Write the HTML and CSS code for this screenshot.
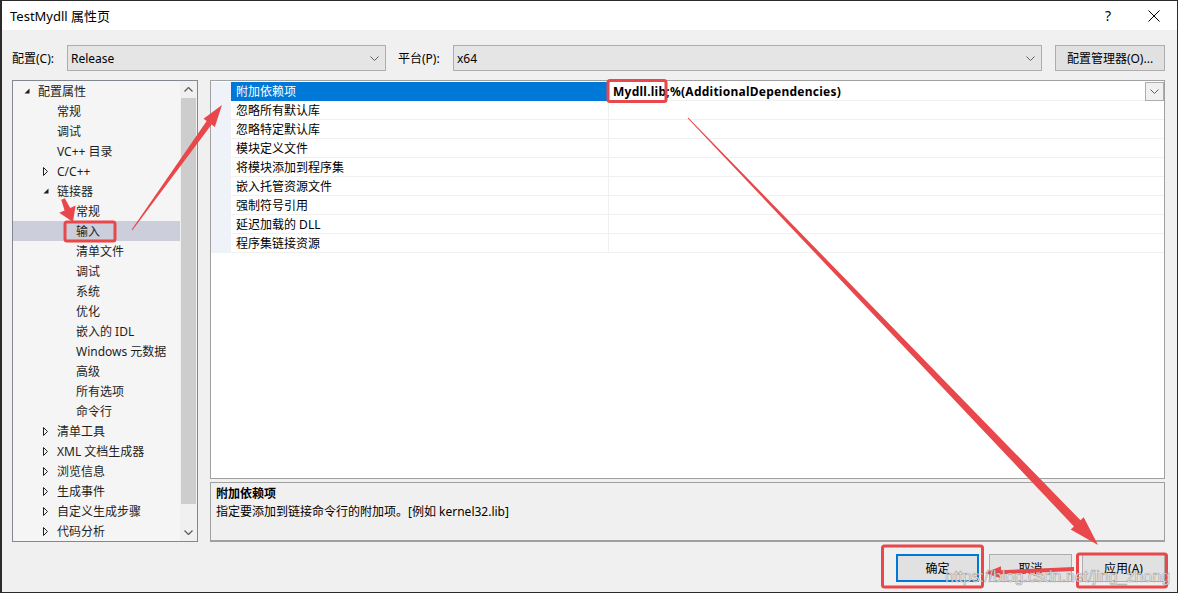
FILE: index.html
```html
<!DOCTYPE html>
<html lang="zh-CN">
<head>
    <meta charset="UTF-8">
    <title>TestMydll 属性页</title>
    <link rel="stylesheet" href="styles.css">
</head>
<body>
<div class="screen">
    <div class="window">
        <!-- Barra de título -->
        <div class="titlebar">
            <span class="title">TestMydll 属性页</span>
            <span class="help">?</span>
            <span class="close-btn">
                <svg width="12" height="12" viewBox="0 0 12 12"><path d="M0.5 0.5 L11.5 11.5 M11.5 0.5 L0.5 11.5" stroke="#000" stroke-width="1" fill="none"/></svg>
            </span>
        </div>

        <!-- Configuración / plataforma -->
        <div class="config-row">
            <span class="config-label">配置(C):</span>
            <div class="combo combo-config">
                <span>Release</span>
                <svg class="chevron" width="9" height="5" viewBox="0 0 9 5"><path d="M0.5 0.5 L4.5 4.5 L8.5 0.5" stroke="#606060" fill="none"/></svg>
            </div>
            <span class="config-label platform-label">平台(P):</span>
            <div class="combo combo-platform">
                <span>x64</span>
                <svg class="chevron" width="9" height="5" viewBox="0 0 9 5"><path d="M0.5 0.5 L4.5 4.5 L8.5 0.5" stroke="#606060" fill="none"/></svg>
            </div>
            <button class="btn btn-manager">配置管理器(O)...</button>
        </div>

        <div class="main">
            <!-- Árbol de propiedades -->
            <div class="tree">
                <div class="tree-list">
                    <div class="tree-row lvl0"><span class="twisty"><svg width="8" height="8" viewBox="0 0 8 8"><path d="M6.5 1.5 L6.5 6.5 L1.5 6.5 Z" fill="#1e1e1e"/></svg></span>配置属性</div>
                    <div class="tree-row lvl1"><span class="twisty"></span>常规</div>
                    <div class="tree-row lvl1"><span class="twisty"></span>调试</div>
                    <div class="tree-row lvl1"><span class="twisty"></span>VC++ 目录</div>
                    <div class="tree-row lvl1"><span class="twisty"><svg width="8" height="9" viewBox="0 0 8 9"><path d="M1.5 0.5 L5.5 4.5 L1.5 8.5 Z" fill="none" stroke="#1e1e1e"/></svg></span>C/C++</div>
                    <div class="tree-row lvl1"><span class="twisty"><svg width="8" height="8" viewBox="0 0 8 8"><path d="M6.5 1.5 L6.5 6.5 L1.5 6.5 Z" fill="#1e1e1e"/></svg></span>链接器</div>
                    <div class="tree-row lvl2"><span class="twisty"></span>常规</div>
                    <div class="tree-row lvl2 selected"><span class="twisty"></span>输入</div>
                    <div class="tree-row lvl2"><span class="twisty"></span>清单文件</div>
                    <div class="tree-row lvl2"><span class="twisty"></span>调试</div>
                    <div class="tree-row lvl2"><span class="twisty"></span>系统</div>
                    <div class="tree-row lvl2"><span class="twisty"></span>优化</div>
                    <div class="tree-row lvl2"><span class="twisty"></span>嵌入的 IDL</div>
                    <div class="tree-row lvl2"><span class="twisty"></span>Windows 元数据</div>
                    <div class="tree-row lvl2"><span class="twisty"></span>高级</div>
                    <div class="tree-row lvl2"><span class="twisty"></span>所有选项</div>
                    <div class="tree-row lvl2"><span class="twisty"></span>命令行</div>
                    <div class="tree-row lvl1"><span class="twisty"><svg width="8" height="9" viewBox="0 0 8 9"><path d="M1.5 0.5 L5.5 4.5 L1.5 8.5 Z" fill="none" stroke="#1e1e1e"/></svg></span>清单工具</div>
                    <div class="tree-row lvl1"><span class="twisty"><svg width="8" height="9" viewBox="0 0 8 9"><path d="M1.5 0.5 L5.5 4.5 L1.5 8.5 Z" fill="none" stroke="#1e1e1e"/></svg></span>XML 文档生成器</div>
                    <div class="tree-row lvl1"><span class="twisty"><svg width="8" height="9" viewBox="0 0 8 9"><path d="M1.5 0.5 L5.5 4.5 L1.5 8.5 Z" fill="none" stroke="#1e1e1e"/></svg></span>浏览信息</div>
                    <div class="tree-row lvl1"><span class="twisty"><svg width="8" height="9" viewBox="0 0 8 9"><path d="M1.5 0.5 L5.5 4.5 L1.5 8.5 Z" fill="none" stroke="#1e1e1e"/></svg></span>生成事件</div>
                    <div class="tree-row lvl1"><span class="twisty"><svg width="8" height="9" viewBox="0 0 8 9"><path d="M1.5 0.5 L5.5 4.5 L1.5 8.5 Z" fill="none" stroke="#1e1e1e"/></svg></span>自定义生成步骤</div>
                    <div class="tree-row lvl1"><span class="twisty"><svg width="8" height="9" viewBox="0 0 8 9"><path d="M1.5 0.5 L5.5 4.5 L1.5 8.5 Z" fill="none" stroke="#1e1e1e"/></svg></span>代码分析</div>
                </div>
                <div class="scrollbar">
                    <div class="scroll-btn"><svg width="9" height="5" viewBox="0 0 9 5"><path d="M0.5 4.5 L4.5 0.5 L8.5 4.5" stroke="#606060" stroke-width="1.3" fill="none"/></svg></div>
                    <div class="scroll-thumb"></div>
                    <div class="scroll-track"></div>
                    <div class="scroll-btn"><svg width="9" height="5" viewBox="0 0 9 5"><path d="M0.5 0.5 L4.5 4.5 L8.5 0.5" stroke="#606060" stroke-width="1.3" fill="none"/></svg></div>
                </div>
            </div>

            <div class="right">
                <!-- Tabla de propiedades -->
                <div class="grid">
                    <div class="grid-rows">
                        <div class="grid-row selected">
                            <div class="gutter"></div>
                            <div class="name">附加依赖项</div>
                            <div class="value"><b>Mydll.lib;%(AdditionalDependencies)</b>
                                <span class="dd"><svg width="9" height="5" viewBox="0 0 9 5"><path d="M0.5 0.5 L4.5 4.5 L8.5 0.5" stroke="#606060" fill="none"/></svg></span>
                            </div>
                        </div>
                        <div class="grid-row"><div class="gutter"></div><div class="name">忽略所有默认库</div><div class="value"></div></div>
                        <div class="grid-row"><div class="gutter"></div><div class="name">忽略特定默认库</div><div class="value"></div></div>
                        <div class="grid-row"><div class="gutter"></div><div class="name">模块定义文件</div><div class="value"></div></div>
                        <div class="grid-row"><div class="gutter"></div><div class="name">将模块添加到程序集</div><div class="value"></div></div>
                        <div class="grid-row"><div class="gutter"></div><div class="name">嵌入托管资源文件</div><div class="value"></div></div>
                        <div class="grid-row"><div class="gutter"></div><div class="name">强制符号引用</div><div class="value"></div></div>
                        <div class="grid-row"><div class="gutter"></div><div class="name">延迟加载的 DLL</div><div class="value"></div></div>
                        <div class="grid-row"><div class="gutter"></div><div class="name">程序集链接资源</div><div class="value"></div></div>
                    </div>
                </div>
                <div class="desc">
                    <div class="desc-title">附加依赖项</div>
                    <div class="desc-text">指定要添加到链接命令行的附加项。[例如 kernel32.lib]</div>
                </div>
            </div>
        </div>

        <div class="buttons">
            <button class="btn btn-default">确定</button>
            <button class="btn">取消</button>
            <button class="btn">应用(A)</button>
        </div>
    </div>

    <!-- Anotaciones en rojo encima de la captura -->
    <svg class="annotations" width="1178" height="593" viewBox="0 0 1178 593">
        <g fill="none" stroke="#e8474b" stroke-width="3">
            <rect x="608" y="80.5" width="58" height="21" rx="2"/>
            <rect x="65" y="222" width="50" height="19" rx="2"/>
            <rect x="882.5" y="546" width="100" height="41" rx="2"/>
            <rect x="1077.5" y="554" width="89" height="33" rx="2"/>
        </g>
        <g fill="#e8474b">
            <polygon points="131.6,229.7 206.7,121.1 203.5,118.8 222,105 214.8,126.9 211.6,124.6 132.4,230.3"/>
            <polygon points="61.2,199.8 64.6,210.4 59.2,212.8 73,222 75.6,205.6 70.2,208 64.8,198.2"/>
            <polygon points="687.6,118.3 1074,526.5 1070.7,529.6 1098,545 1083.7,517.2 1080.5,520.3 688.4,117.7"/>
            <polygon points="1074,567 1001,570.3 1001,566.3 985,573 1001,578.3 1001,574.3 1074,571"/>
        </g>
        <text class="watermark" x="945" y="582">https://blog.csdn.net/jing_zhong</text>
    </svg>
</div>
</body>
</html>
```

FILE: styles.css
```css
/* Estilos generales */
* {
    box-sizing: border-box;
    margin: 0;
    padding: 0;
}

body {
    font-family: "Noto Sans", "Noto Sans CJK SC", sans-serif;
    font-size: 12px;
    color: #000;
    background: #f0f0f0;
}

.screen {
    position: relative;
    width: 1178px;
    height: 593px;
}

.window {
    width: 1178px;
    height: 593px;
    background: #f0f0f0;
    border: 1px solid #2b2b2b;
    border-left-width: 2px;
    overflow: hidden;
}

/* Barra de título */
.titlebar {
    height: 29px;
    background: #fff;
    display: flex;
    align-items: center;
    padding-left: 8px;
}

.title {
    flex: 1;
    font-size: 13px;
}

.help {
    width: 46px;
    text-align: center;
    font-size: 14px;
}

.close-btn {
    width: 46px;
    height: 29px;
    display: flex;
    align-items: center;
    justify-content: center;
}

/* Fila de configuración */
.config-row {
    display: flex;
    align-items: center;
    height: 26px;
    margin-top: 15px;
    padding: 0 12px 0 10px;
}

.config-label {
    width: 55px;
}

.platform-label {
    margin-left: 12px;
}

.combo {
    height: 26px;
    display: flex;
    align-items: center;
    justify-content: space-between;
    padding: 0 6px 0 3px;
    background: #e5e5e5;
    border: 1px solid #adadad;
}

.combo-config {
    width: 319px;
}

.combo-platform {
    flex: 1;
}

.btn {
    font-family: "Noto Sans", "Noto Sans CJK SC", sans-serif;
    font-size: 12px;
    color: #000;
    background: #e1e1e1;
    border: 1px solid #adadad;
}

.btn-manager {
    width: 110px;
    height: 26px;
    margin-left: 13px;
}

/* Zona principal */
.main {
    display: flex;
    gap: 12px;
    margin-top: 9px;
    padding: 0 12px 0 10px;
    height: 462px;
}

.tree {
    width: 186px;
    display: flex;
    background: #f5f5f5;
    border: 1px solid #828790;
}

.tree-list {
    flex: 1;
}

.tree-row {
    display: flex;
    align-items: center;
    height: 20px;
    color: #1e1e1e;
    white-space: nowrap;
}

.tree-row.lvl0 { padding-left: 6px; }
.tree-row.lvl1 { padding-left: 25px; }
.tree-row.lvl2 { padding-left: 44px; }

.tree-row.selected {
    background: #cccedb;
}

.twisty {
    width: 19px;
    height: 20px;
    display: flex;
    align-items: center;
    padding-left: 4px;
}

.scrollbar {
    width: 17px;
    display: flex;
    flex-direction: column;
    background: #f0f0f0;
}

.scroll-btn {
    height: 17px;
    display: flex;
    align-items: center;
    justify-content: center;
}

.scroll-thumb {
    height: 406px;
    margin: 0 1px;
    background: #cdcdcd;
}

.scroll-track {
    flex: 1;
}

.right {
    flex: 1;
    display: flex;
    flex-direction: column;
    gap: 3px;
}

/* Tabla de propiedades */
.grid {
    height: 399px;
    background: #fff;
    border: 1px solid #a0a0a0;
    padding-top: 1px;
}

.grid-row {
    display: flex;
    height: 19px;
}

.gutter {
    width: 20px;
    background: #eff2f9;
}

.name {
    width: 378px;
    padding-left: 5px;
    line-height: 19px;
    border-bottom: 1px solid #f0f0f0;
    border-right: 1px solid #f0f0f0;
    white-space: nowrap;
}

.grid-row.selected .name {
    background: #0078d7;
    color: #fff;
    border-bottom-color: #0078d7;
}

.value {
    flex: 1;
    display: flex;
    align-items: center;
    justify-content: space-between;
    padding-left: 4px;
    border-bottom: 1px solid #f0f0f0;
}

.value b {
    font-weight: bold;
    letter-spacing: 0.25px;
}

.dd {
    width: 19px;
    height: 19px;
    display: flex;
    align-items: center;
    justify-content: center;
    background: #f0f0f0;
    border: 1px solid #acacac;
}

/* Descripción */
.desc {
    flex: 1;
    padding: 2px 5px;
    background: #f0f0f0;
    border: 1px solid #a0a0a0;
    border-bottom: 2px solid #a0a0a0;
    line-height: 18px;
}

.desc-title {
    font-weight: bold;
}

/* Botones inferiores */
.buttons {
    display: flex;
    justify-content: flex-end;
    gap: 10px;
    margin-top: 12px;
    padding-right: 12px;
}

.buttons .btn {
    width: 83px;
    height: 28px;
}

.btn-default {
    border: 2px solid #0078d7;
}

/* Anotaciones */
.annotations {
    position: absolute;
    top: 0;
    left: 0;
    pointer-events: none;
}

.watermark {
    font-family: "Liberation Sans", Arial, sans-serif;
    font-size: 16px;
    fill: rgba(255, 255, 255, 0.9);
    stroke: rgba(90, 90, 90, 0.5);
    stroke-width: 0.7px;
}
```
